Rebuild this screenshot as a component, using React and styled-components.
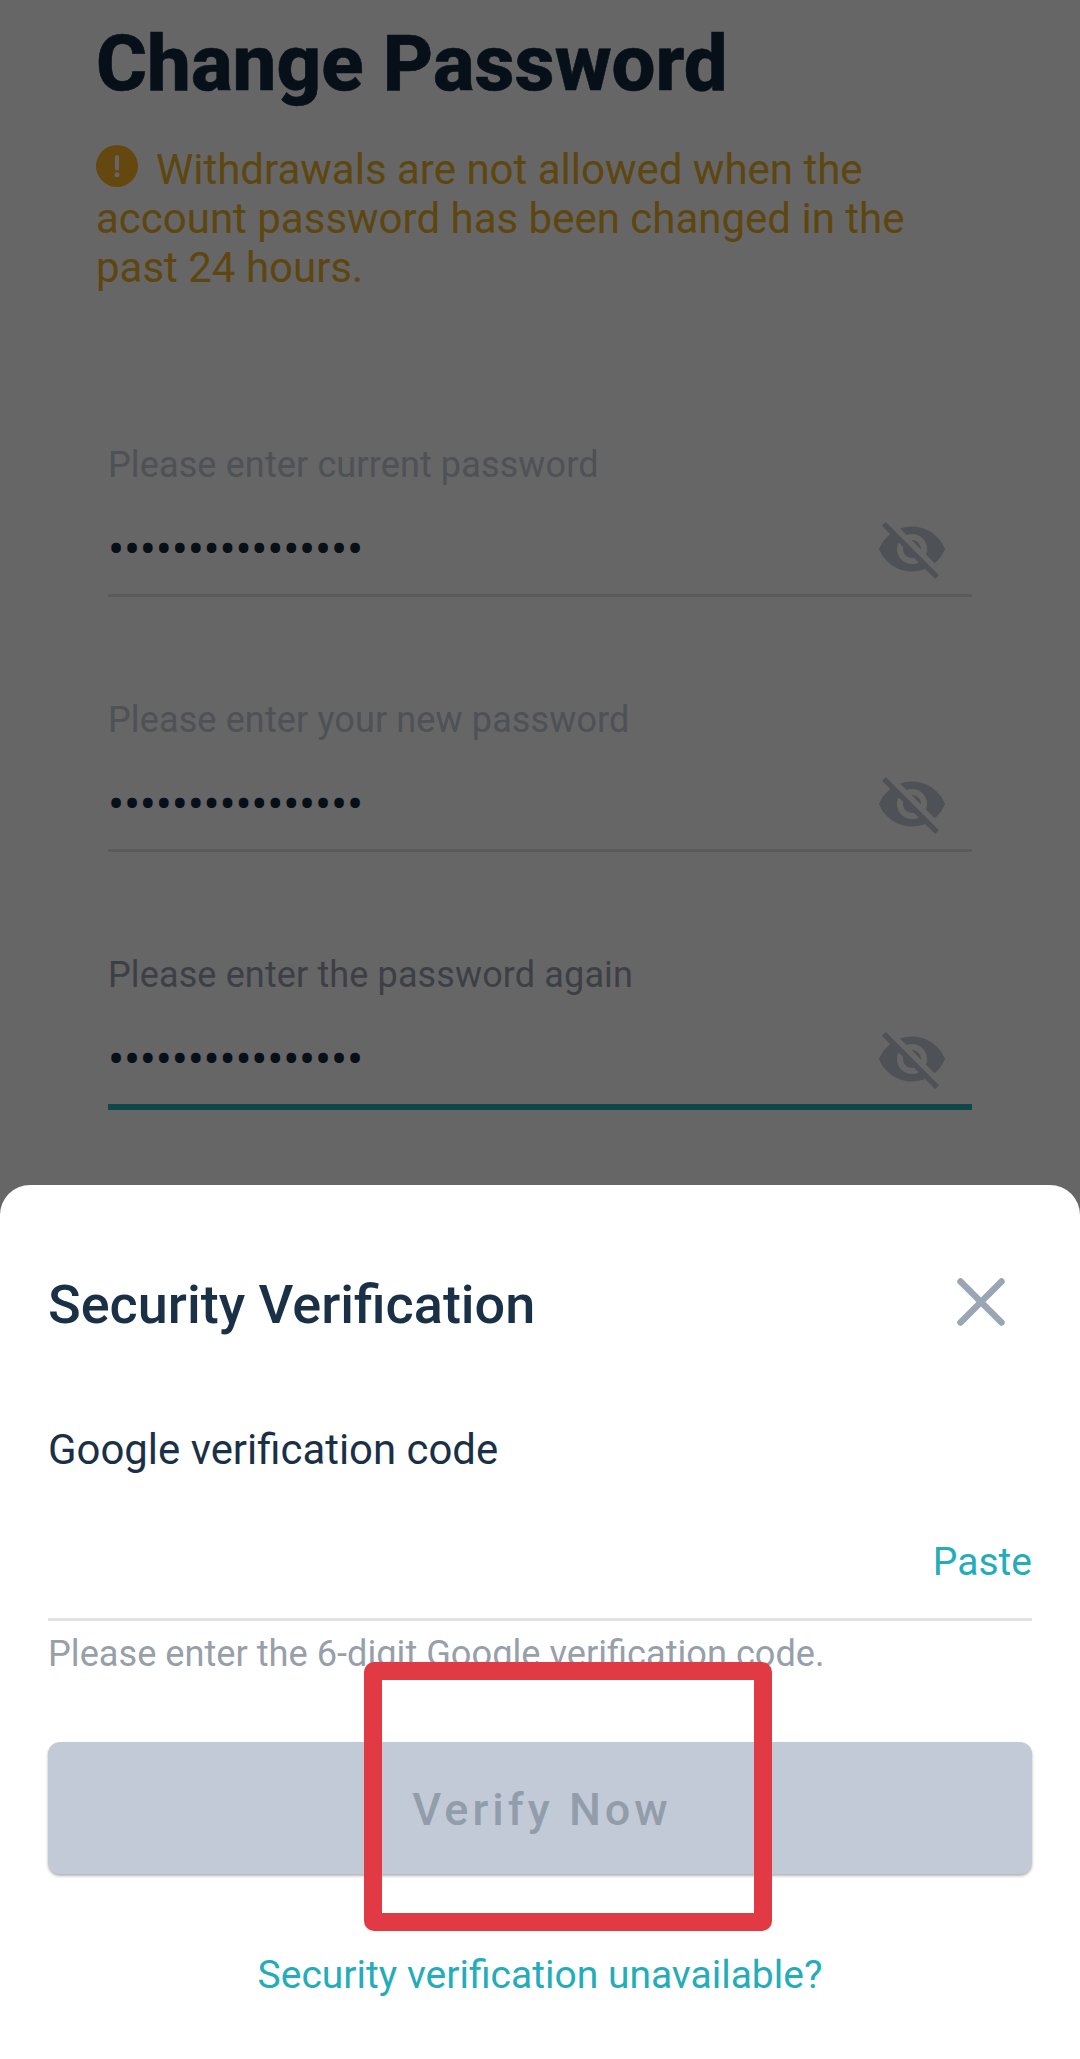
import React from "react";
import styled, { createGlobalStyle } from "styled-components";

const GlobalStyle = createGlobalStyle`
  * { box-sizing: border-box; }
  body { margin: 0; background: #fff; font-family: Roboto, "Liberation Sans", sans-serif; }
`;

const Screen = styled.div`
  position: relative;
  display: flex;
  flex-direction: column;
  width: 1080px;
  height: 2059px;
  overflow: hidden;
  background: #fff;
`;

const Page = styled.main`
  height: 1185px;
  padding: 18px 96px 0;
`;

const PageTitle = styled.h1`
  margin: 0;
  font-size: 78px;
  line-height: 92px;
  font-weight: 800;
  -webkit-text-stroke: 0.6px #122a40;
  color: #122a40;
`;

const Warning = styled.p`
  width: 850px;
  margin: 35px 0 0;
  font-size: 42px;
  line-height: 49px;
  color: #ecae2c;
`;

const WarningIcon = styled.svg`
  width: 42px;
  height: 42px;
  margin-right: 18px;
  vertical-align: top;
`;

const Fields = styled.div`
  display: flex;
  flex-direction: column;
  margin: 151px 12px 0;
`;

const Field = styled.label`
  display: block;
  height: 255px;
`;

const FieldLabel = styled.div`
  font-size: 36px;
  line-height: 44px;
  letter-spacing: 0.13px;
  color: ${(p) => (p.$focused ? "#97a0ae" : "#c4cad4")};
`;

const FieldRow = styled.div`
  display: flex;
  align-items: center;
  justify-content: space-between;
  margin-top: 26px;
  padding: 0 24px 9px 0;
  border-bottom: ${(p) => (p.$focused ? "6px solid #25aebd" : "3px solid #e0e0e0")};
`;

const Mask = styled.span`
  padding-top: 2px;
  font-size: 48px;
  line-height: 70px;
  letter-spacing: -0.27px;
  color: #122a40;
`;

const EyeIcon = styled.svg`
  width: 72px;
  height: 72px;
  fill: #c2cad5;
`;

const Scrim = styled.div`
  position: absolute;
  inset: 0;
  background: rgba(0, 0, 0, 0.6);
`;

const Sheet = styled.section`
  position: relative;
  flex: 1;
  padding: 90px 48px 0;
  border-radius: 30px 30px 0 0;
  background: #fff;
`;

const SheetHeader = styled.header`
  display: flex;
  justify-content: space-between;
  align-items: flex-start;
  padding-right: 24px;
`;

const SheetTitle = styled.h2`
  margin: 0;
  font-size: 54px;
  line-height: 60px;
  font-weight: 500;
  color: #1a3047;
`;

const CloseIcon = styled.svg`
  width: 54px;
  height: 54px;
  stroke: #9aa6b4;
  stroke-width: 6.5;
  stroke-linecap: round;
`;

const CodeLabel = styled.div`
  margin-top: 90px;
  font-size: 41.9px;
  line-height: 50px;
  color: #1a3047;
`;

const CodeRow = styled.div`
  display: flex;
  align-items: flex-end;
  justify-content: flex-end;
  height: 146px;
  padding-bottom: 33px;
  border-bottom: 3px solid #e2e2e2;
`;

const TextLink = styled.a`
  font-size: 39px;
  line-height: 46px;
  color: #25acbb;
`;

const Helper = styled.div`
  margin-top: 11px;
  font-size: 36.2px;
  line-height: 44px;
  color: #979fab;
`;

const VerifyButton = styled.button`
  display: flex;
  align-items: center;
  justify-content: center;
  width: 100%;
  height: 132px;
  margin-top: 66px;
  padding: 3px 0 0 4px;
  border: 0;
  border-radius: 12px;
  background: #c3cad7;
  box-shadow: 0 2px 3px rgba(0, 0, 0, 0.3);
  font: 500 45px Roboto, "Liberation Sans", sans-serif;
  letter-spacing: 4px;
  color: #929dab;
`;

const Footer = styled.footer`
  display: flex;
  justify-content: center;
  margin-top: 78px;
`;

const Highlight = styled.div`
  position: absolute;
  left: 364px;
  top: 477px;
  width: 408px;
  height: 269px;
  border: 18px solid #e23a44;
  border-radius: 10px;
`;

const fields = [
  { label: "Please enter current password" },
  { label: "Please enter your new password" },
  { label: "Please enter the password again", focused: true },
];

function VisibilityOff() {
  return (
    <EyeIcon viewBox="0 0 24 24">
      <path d="M12 7c2.76 0 5 2.24 5 5 0 .65-.13 1.26-.36 1.83l2.92 2.92c1.51-1.26 2.7-2.89 3.43-4.75-1.73-4.39-6-7.5-11-7.5-1.4 0-2.74.25-3.98.7l2.16 2.16C10.74 7.13 11.35 7 12 7zM2 4.27l2.28 2.28.46.46C3.08 8.3 1.78 10.02 1 12c1.73 4.39 6 7.5 11 7.5 1.55 0 3.03-.3 4.38-.84l.42.42L19.73 22 21 20.73 3.27 3 2 4.27zM7.53 9.8l1.55 1.55c-.05.21-.08.43-.08.65 0 1.66 1.34 3 3 3 .22 0 .44-.03.65-.08l1.55 1.55c-.67.33-1.41.53-2.2.53-2.76 0-5-2.24-5-5 0-.79.2-1.53.53-2.2zm4.31-.78l3.15 3.15.02-.16c0-1.66-1.34-3-3-3l-.17.01z" />
    </EyeIcon>
  );
}

export default function App() {
  return (
    <Screen>
      <GlobalStyle />
      <Page>
        <PageTitle>Change Password</PageTitle>
        <Warning>
          <WarningIcon viewBox="0 0 42 42">
            <circle cx="21" cy="21" r="21" fill="#fab327" />
            <path d="M21 12v11.5" stroke="#fff" strokeWidth="4" strokeLinecap="round" />
            <circle cx="21" cy="29.7" r="2.5" fill="#fff" />
          </WarningIcon>
          Withdrawals are not allowed when the account password has been changed in the past 24 hours.
        </Warning>
        <Fields>
          {fields.map((f) => (
            <Field key={f.label}>
              <FieldLabel $focused={f.focused}>{f.label}</FieldLabel>
              <FieldRow $focused={f.focused}>
                <Mask>{"•".repeat(16)}</Mask>
                <VisibilityOff />
              </FieldRow>
            </Field>
          ))}
        </Fields>
      </Page>
      <Scrim />
      <Sheet>
        <SheetHeader>
          <SheetTitle>Security Verification</SheetTitle>
          <CloseIcon viewBox="0 0 54 54">
            <path d="M6.5 6.5l41 41M47.5 6.5l-41 41" />
          </CloseIcon>
        </SheetHeader>
        <CodeLabel>Google verification code</CodeLabel>
        <CodeRow>
          <TextLink>Paste</TextLink>
        </CodeRow>
        <Helper>Please enter the 6-digit Google verification code.</Helper>
        <VerifyButton>Verify Now</VerifyButton>
        <Footer>
          <TextLink>Security verification unavailable?</TextLink>
        </Footer>
        <Highlight />
      </Sheet>
    </Screen>
  );
}
